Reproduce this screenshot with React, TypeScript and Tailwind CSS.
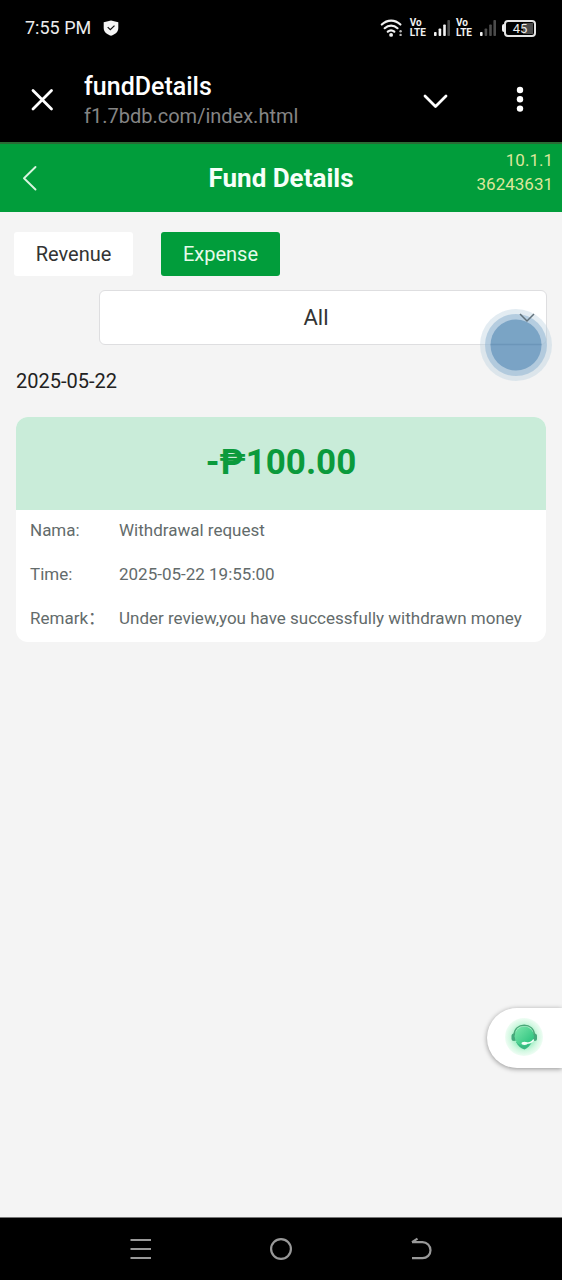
import React from "react";

function SignalBars({ strong }: { strong: boolean }) {
  const on = "#f2f2f2";
  const off = "#4b4b4b";
  return (
    <svg className="h-[18px] w-4" viewBox="0 0 16 18" aria-hidden="true">
      <rect x="0" y="13" width="2.6" height="4" rx="0.8" fill={on} />
      <rect x="4.6" y="9.5" width="2.6" height="7.5" rx="0.8" fill={strong ? on : off} />
      <rect x="9.2" y="5.5" width="2.6" height="11.5" rx="0.8" fill={strong ? on : off} />
      <rect x="13.4" y="1" width="2.6" height="16" rx="0.8" fill={off} />
    </svg>
  );
}

function VoLte() {
  return (
    <span className="flex flex-col text-[10px] leading-[10px] font-bold text-[#f2f2f2]">
      <span>Vo</span>
      <span>LTE</span>
    </span>
  );
}

function StatusBar() {
  return (
    <div className="flex h-14 items-center justify-between pr-[26px] pl-[25px] text-[#ececec]">
      <div className="flex items-center gap-3">
        <span className="text-lg">7:55 PM</span>
        <svg className="h-4 w-4" viewBox="0 0 16 16" aria-hidden="true">
          <path d="M8 .4 15.300 2.300V8c0 4-3.300 6.500-7.300 7.700C4 14.500.7 12 .7 8V2.300Z" fill="#f5f5f5" />
          <path d="m4.700 7.100 2.600 2.500 4.200-4" fill="none" stroke="#111" strokeWidth="1.300" />
        </svg>
      </div>
      <div className="flex items-center">
        <svg className="mr-1.5 h-5 w-6" viewBox="0 0 24 20" aria-hidden="true">
          <g fill="none" stroke="#f2f2f2" strokeWidth="2.200" strokeLinecap="round">
            <path d="M1.800 6.500c5.500-5.300 13.200-5.300 18.600 0" />
            <path d="M4.700 10.200c3.800-3.500 9-3.500 12.800 0" />
            <path d="M7.800 13.700c2-1.700 4.500-1.700 6.500 0" />
          </g>
          <circle cx="11.100" cy="16.900" r="1.900" fill="#f2f2f2" />
          <circle cx="20.600" cy="13.300" r="1.200" fill="#bbb" />
          <circle cx="20.600" cy="16.900" r="1.200" fill="#bbb" />
        </svg>
        <VoLte />
        <span className="mr-1.5 ml-2">
          <SignalBars strong />
        </span>
        <VoLte />
        <span className="mr-1.5 ml-2">
          <SignalBars strong={false} />
        </span>
        <span className="h-2 w-[2px] rounded-l bg-[#f2f2f2]" />
        <span className="relative flex h-[17px] w-8 items-center justify-center rounded-[4px] border-2 border-[#e4e4e4]">
          <span className="absolute inset-y-px right-px w-2.5 bg-[#4b4b4b]" />
          <span className="relative text-[13px] leading-none">45</span>
        </span>
      </div>
    </div>
  );
}

function BrowserBar() {
  return (
    <div className="flex h-[86px] items-center pr-7 pl-[30px] text-white">
      <button type="button" aria-label="Close" className="mr-[30px] h-6 w-6">
        <svg viewBox="0 0 24 24" fill="none" stroke="currentColor" strokeWidth="2.800" strokeLinecap="round">
          <path d="m3 3.500 18.500 18.500M21.500 3.500 3 22" />
        </svg>
      </button>
      <div className="flex-1 pt-1">
        <div className="text-[25px] leading-[30px] font-medium">fundDetails</div>
        <div className="text-xl leading-7 text-[#858585]">f1.7bdb.com/index.html</div>
      </div>
      <button type="button" aria-label="Collapse" className="mr-[57px] h-7 w-7">
        <svg viewBox="0 0 28 28" fill="none" stroke="currentColor" strokeWidth="2.800" strokeLinecap="round" strokeLinejoin="round">
          <path d="m4 11 10.500 10.500L25 11" />
        </svg>
      </button>
      <button type="button" aria-label="More options" className="h-7 w-7">
        <svg viewBox="0 0 28 28" fill="currentColor">
          <circle cx="14" cy="5" r="3.200" />
          <circle cx="14" cy="14.300" r="3.200" />
          <circle cx="14" cy="23.600" r="3.200" />
        </svg>
      </button>
    </div>
  );
}

function PageHeader() {
  return (
    <header className="grid h-[70px] grid-cols-[1fr_auto_1fr] items-center border-t-2 border-[#2b6a35] bg-[#019d3b] px-[9px]">
      <button type="button" aria-label="Back" className="ml-[9px] h-7 w-6">
        <svg viewBox="0 0 24 28" fill="none" stroke="#d9f5e0" strokeWidth="1.900" strokeLinecap="round" strokeLinejoin="round">
          <path d="M17.500 3 6 14.300 17.500 25.500" />
        </svg>
      </button>
      <h1 className="text-[26px] leading-8 font-bold text-[#f6fff8]">Fund Details</h1>
      <div className="self-start pt-1 text-right text-[17px] leading-6 text-[#dde79c]">
        <div>10.1.1</div>
        <div>36243631</div>
      </div>
    </header>
  );
}

const rows = [
  { label: "Nama:", value: "Withdrawal request" },
  { label: "Time:", value: "2025-05-22 19:55:00" },
  { label: "Remark：", value: "Under review,you have successfully withdrawn money" },
];

function RecordCard() {
  return (
    <article className="mt-[22px] overflow-hidden rounded-xl bg-white">
      <div className="flex h-[93px] items-center justify-center bg-[#c9ecd9] text-[35px] font-bold text-[#0b9a3c]">
        -₱100.00
      </div>
      <dl className="px-3.5 text-[17px] text-[#636b6b]">
        {rows.map((row) => (
          <div key={row.label} className="flex h-11 items-center pb-0.5">
            <dt className="w-[89px] shrink-0 whitespace-nowrap">{row.label}</dt>
            <dd>{row.value}</dd>
          </div>
        ))}
      </dl>
    </article>
  );
}

function TypeSelect() {
  return (
    <div className="relative mt-[14px] -mr-px ml-[83px]">
      <select
        aria-label="Record type"
        className="h-[55px] w-full appearance-none rounded-md border border-[#dedee0] bg-white pr-[14px] text-center text-[22px] text-[#333] [text-align-last:center]"
      >
        <option>All</option>
      </select>
      <svg className="pointer-events-none absolute top-[18px] -right-[6px] h-[74px] w-[74px]" viewBox="0 0 74 74" aria-hidden="true">
        <circle cx="37" cy="37" r="36" fill="#b9d0df" fillOpacity="0.400" />
        <circle cx="37" cy="37" r="31" fill="#8fb5d2" fillOpacity="0.550" />
        <circle cx="37" cy="37" r="25.500" fill="#6795bc" fillOpacity="0.750" />
        <path d="M11.500 36.500h51" stroke="#5f8bb0" strokeWidth="1.500" strokeOpacity="0.500" />
        <path d="m41 6 7 7 7-7" fill="none" stroke="#62727c" strokeWidth="1.500" />
      </svg>
    </div>
  );
}

function SupportButton() {
  return (
    <button
      type="button"
      aria-label="Customer support"
      className="mb-[149px] flex h-[60px] w-[75px] items-center self-end rounded-l-full bg-white pl-[17px] shadow-[0_1px_5px_rgba(0,0,0,0.4)]"
    >
      <svg className="h-10 w-10" viewBox="0 0 40 40" aria-hidden="true">
        <defs>
          <radialGradient id="halo">
            <stop offset="0.3" stopColor="#7fe8b0" />
            <stop offset="0.75" stopColor="#d3f8e2" />
            <stop offset="1" stopColor="#effdf4" />
          </radialGradient>
          <linearGradient id="face" x1="0" y1="0" x2="1" y2="1">
            <stop offset="0" stopColor="#7ee8ac" />
            <stop offset="1" stopColor="#20bd78" />
          </linearGradient>
        </defs>
        <circle cx="20" cy="19" r="19" fill="url(#halo)" />
        <path d="M12 24c2 4 5 6.500 8.500 7.500 3-1.500 6-4 7.500-8Z" fill="#39b981" />
        <rect x="7.500" y="15.500" width="5" height="7.500" rx="2.500" fill="#44a87b" />
        <rect x="28" y="15.500" width="5" height="7.500" rx="2.500" fill="#44a87b" />
        <circle cx="20.300" cy="18.300" r="9.700" fill="url(#face)" />
        <path d="M10 17c.5-6.500 4.800-9.700 10.200-9.700S30 10.500 30.500 17" fill="none" stroke="#4aa879" strokeWidth="1.500" />
        <path d="M29.500 22c-1.600 2.400-4.500 3.200-7.500 3.300" fill="none" stroke="#f2fff8" strokeWidth="1.500" strokeLinecap="round" />
        <ellipse cx="20.500" cy="25.300" rx="3" ry="1.600" fill="#f2fff8" />
      </svg>
    </button>
  );
}

function NavigationBar() {
  return (
    <nav className="flex h-[63px] items-center justify-center gap-28 border-t border-[#777] bg-black text-[#999]">
      <button type="button" aria-label="Recent apps" className="h-7 w-7">
        <svg viewBox="0 0 28 28" stroke="currentColor" strokeWidth="2.200">
          <path d="M3.500 5h20.500M3.500 14h20.500M3.500 23h20.500" />
        </svg>
      </button>
      <button type="button" aria-label="Home" className="h-7 w-7">
        <svg viewBox="0 0 28 28" fill="none" stroke="currentColor" strokeWidth="2.200">
          <circle cx="14" cy="14" r="9.900" />
        </svg>
      </button>
      <button type="button" aria-label="Back" className="h-7 w-7">
        <svg viewBox="0 0 28 28" fill="none" stroke="currentColor" strokeWidth="2.200">
          <path d="M5 7.200h10.500a8 8 0 0 1 0 16H5M5 7.200l5.500-3.600" />
        </svg>
      </button>
    </nav>
  );
}

export default function App() {
  return (
    <div className="flex min-h-screen flex-col bg-[#f4f4f4] font-[Roboto,'Noto_Sans_CJK_SC',sans-serif]">
      <div className="bg-black">
        <StatusBar />
        <BrowserBar />
      </div>
      <PageHeader />
      <main className="flex-1 px-4 pt-5">
        <div className="-ml-0.5 flex gap-7">
          <button type="button" className="h-11 w-[119px] rounded-[3px] bg-white text-xl text-[#333]">
            Revenue
          </button>
          <button type="button" className="h-11 w-[119px] rounded-[3px] bg-[#019d3b] text-xl text-[#e6fbea]">
            Expense
          </button>
        </div>
        <TypeSelect />
        <h2 className="mt-[22px] text-xl leading-7 text-[#222]">2025-05-22</h2>
        <RecordCard />
      </main>
      <SupportButton />
      <NavigationBar />
    </div>
  );
}
